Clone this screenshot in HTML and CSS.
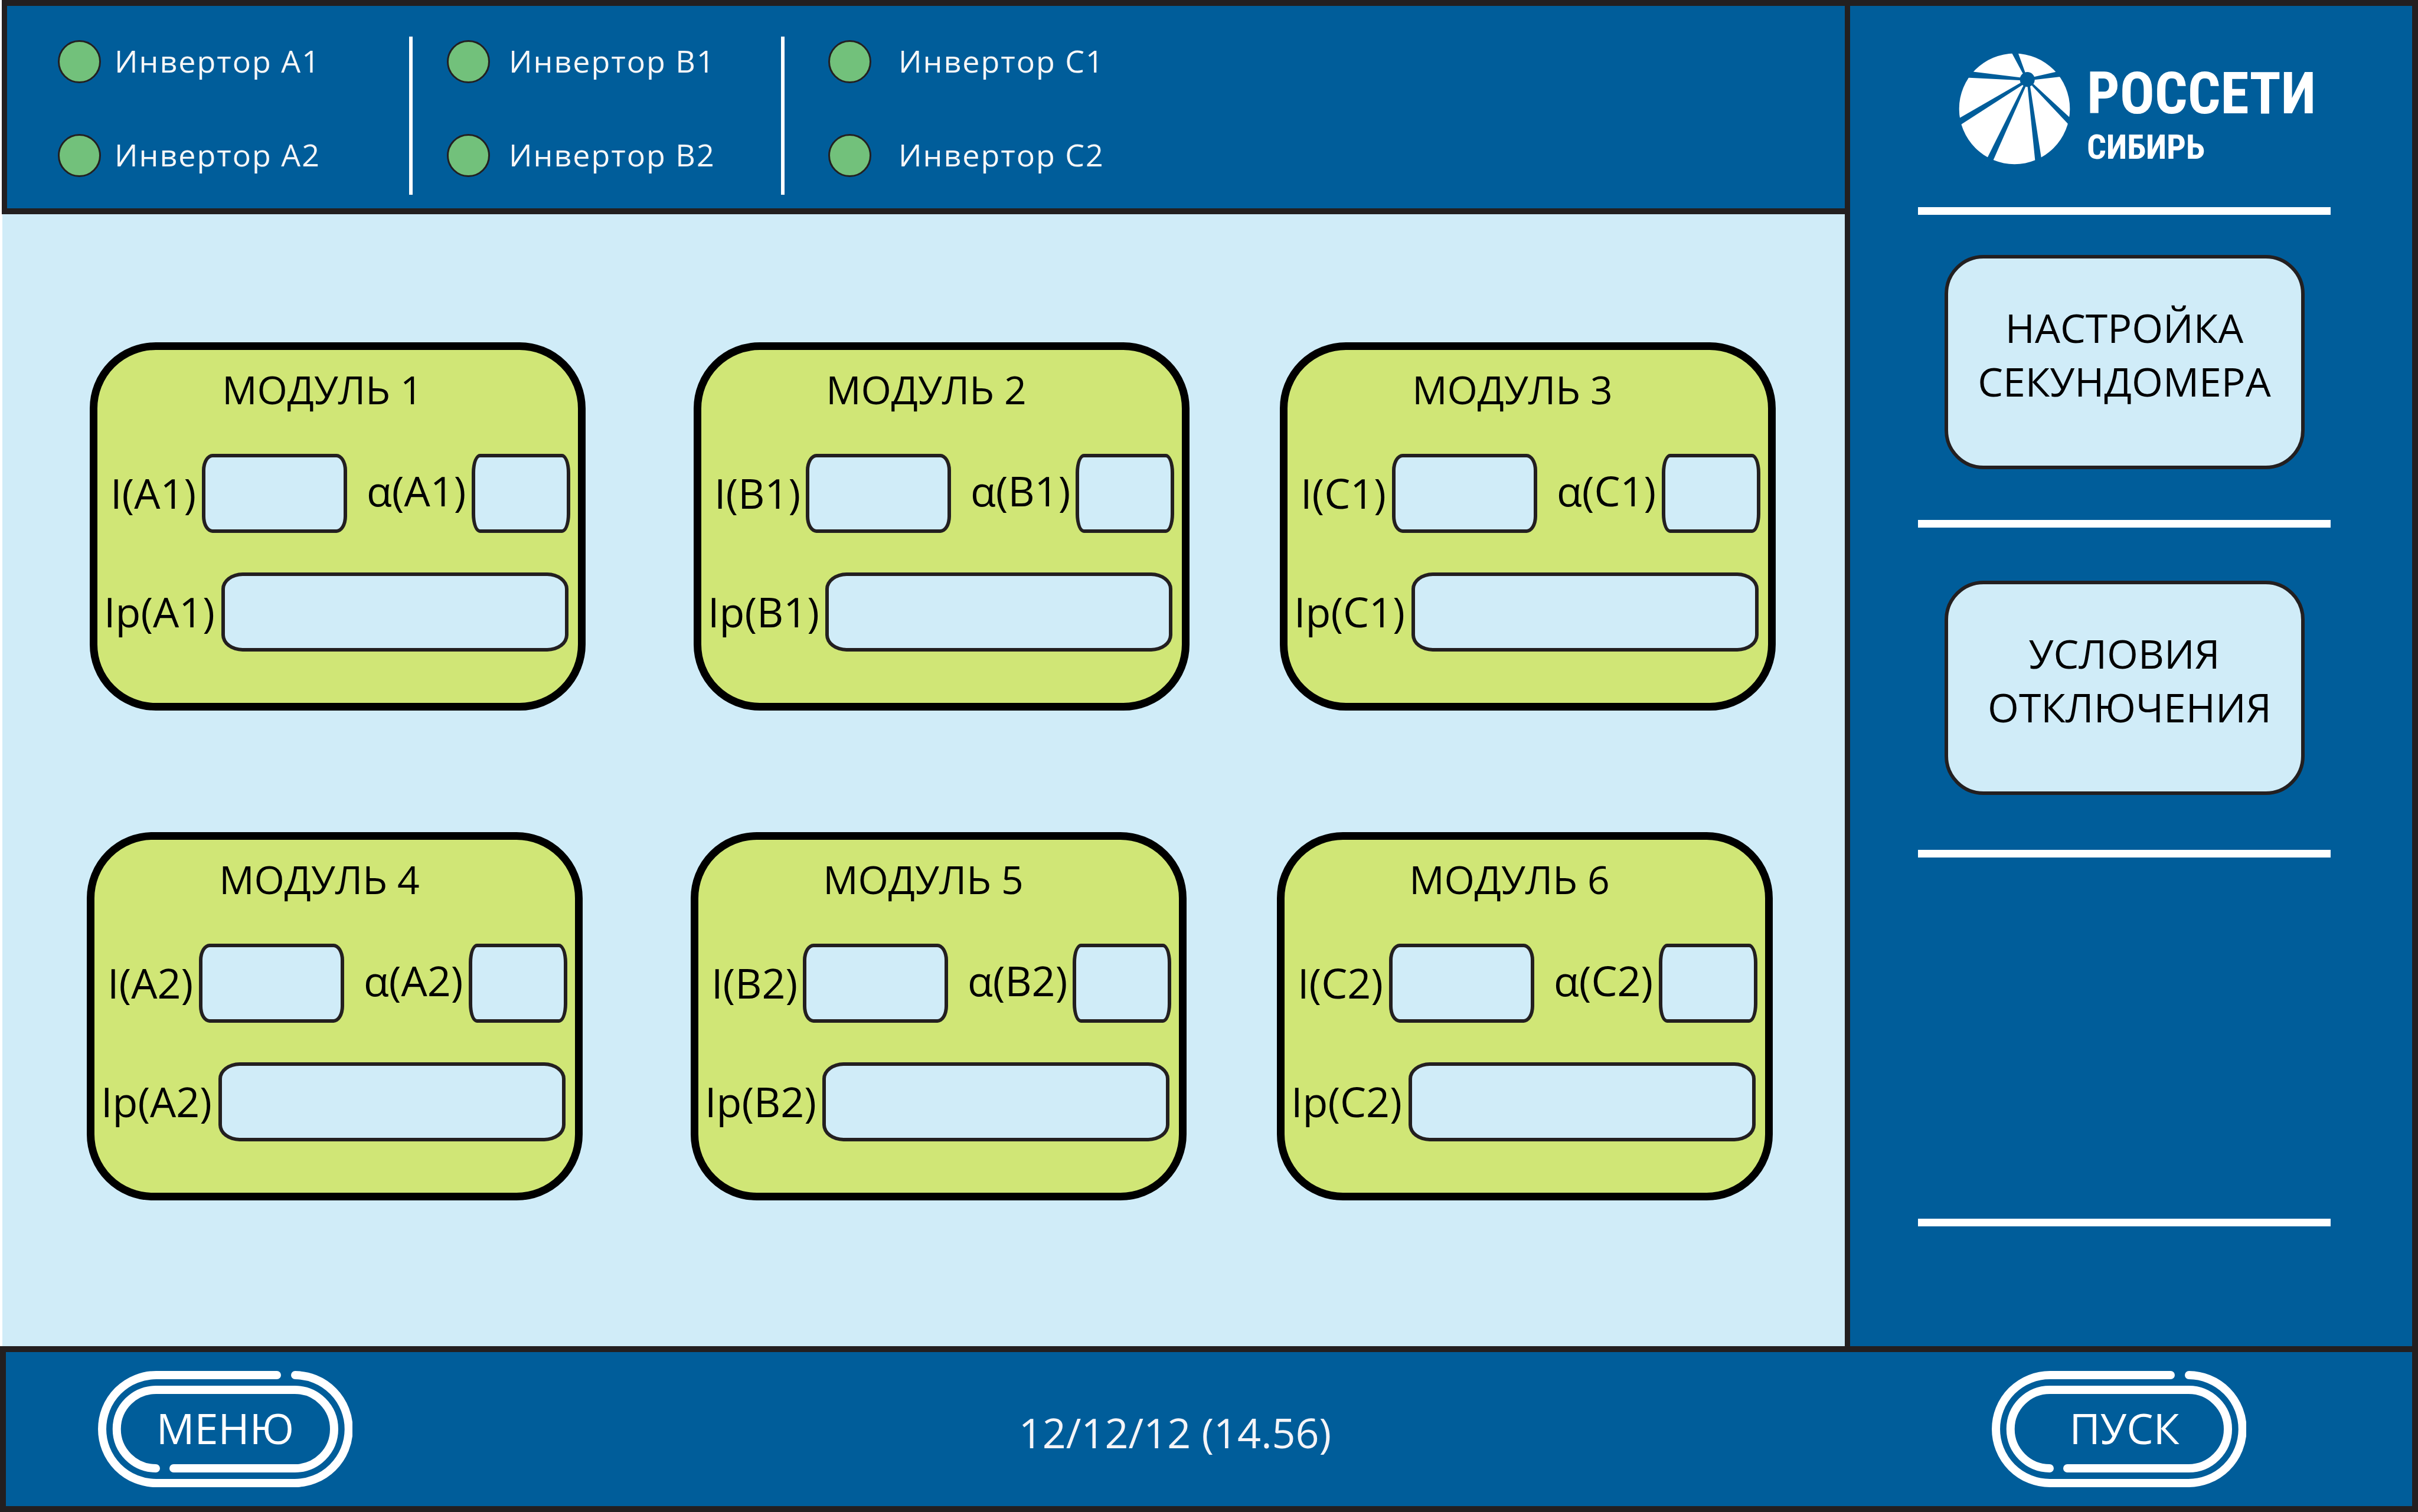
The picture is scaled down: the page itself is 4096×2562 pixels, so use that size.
FILE: index.html
```html
<!DOCTYPE html>
<html lang="ru">
<head>
<meta charset="utf-8">
<title>Россети Сибирь — панель модулей</title>
<link rel="stylesheet" href="styles.css">
</head>
<body>
<div class="panel">
  <header class="status">
    <ul class="status-group">
      <li class="inverter"><span class="lamp"></span><span class="inverter-name">Инвертор A1</span></li>
      <li class="inverter"><span class="lamp"></span><span class="inverter-name">Инвертор A2</span></li>
    </ul>
    <ul class="status-group status-group-b">
      <li class="inverter"><span class="lamp"></span><span class="inverter-name">Инвертор B1</span></li>
      <li class="inverter"><span class="lamp"></span><span class="inverter-name">Инвертор B2</span></li>
    </ul>
    <ul class="status-group status-group-c">
      <li class="inverter"><span class="lamp"></span><span class="inverter-name">Инвертор C1</span></li>
      <li class="inverter"><span class="lamp"></span><span class="inverter-name">Инвертор C2</span></li>
    </ul>
  </header>

  <aside class="sidebar">
    <div class="logo">
      <svg class="logo-mark" viewBox="42 28 189 189" aria-hidden="true">
        <circle class="logo-globe" cx="136.5" cy="122.4" r="93.8"/>
        <g class="logo-cut">
          <path d="M131 26H142L154.3 60 158 72 149.9 61.2Z"/>
          <path d="M50 57.4 145.9 69.2 158 72 145 74 50 69.3Z"/>
          <path d="M35.5 142.4 146.4 78.6 158 72 149.9 81.9 38.6 153.7Z"/>
          <path d="M85 216.4 149.9 86.3 158 72 154.7 86.3 95.3 221.3Z"/>
          <path d="M172.6 221.8 158.7 85.5 158 72 163 84.2 183.4 215.6Z"/>
          <path d="M237.9 144.4 169.6 81.2 158 72 167.5 84.7 233.5 154.7Z"/>
          <path d="M216.6 57.4 170.5 68.1 158 72 171.8 73 223 67Z"/>
          <circle cx="158.2" cy="72.7" r="12.6"/>
        </g>
      </svg>
      <div class="logo-text">
        <span class="logo-name">РОССЕТИ</span>
        <span class="logo-region">СИБИРЬ</span>
      </div>
    </div>
    <hr class="rule rule-logo">
    <button class="side-button" type="button">НАСТРОЙКА<br>СЕКУНДОМЕРА</button>
    <hr class="rule rule-timer">
    <button class="side-button" type="button">УСЛОВИЯ<br>&nbsp;ОТКЛЮЧЕНИЯ</button>
    <hr class="rule rule-trip">
    <hr class="rule rule-last">
  </aside>

  <main class="modules">
    <div class="module-row">
      <section class="module">
        <h2 class="module-title">МОДУЛЬ 1</h2>
        <div class="fields">
          <label class="name-i" for="i-a1">I(A1)</label><input class="box box-i" id="i-a1" type="text">
          <label class="name-alpha" for="al-a1">α(A1)</label><input class="box box-alpha" id="al-a1" type="text">
        </div>
        <div class="fields fields-wide">
          <label class="name-ip" for="ip-a1">Ip(A1)</label><input class="box box-ip" id="ip-a1" type="text">
        </div>
      </section>
      <section class="module">
        <h2 class="module-title">МОДУЛЬ 2</h2>
        <div class="fields">
          <label class="name-i" for="i-b1">I(B1)</label><input class="box box-i" id="i-b1" type="text">
          <label class="name-alpha" for="al-b1">α(B1)</label><input class="box box-alpha" id="al-b1" type="text">
        </div>
        <div class="fields fields-wide">
          <label class="name-ip" for="ip-b1">Ip(B1)</label><input class="box box-ip" id="ip-b1" type="text">
        </div>
      </section>
      <section class="module">
        <h2 class="module-title">МОДУЛЬ 3</h2>
        <div class="fields">
          <label class="name-i" for="i-c1">I(C1)</label><input class="box box-i" id="i-c1" type="text">
          <label class="name-alpha" for="al-c1">α(C1)</label><input class="box box-alpha" id="al-c1" type="text">
        </div>
        <div class="fields fields-wide">
          <label class="name-ip" for="ip-c1">Ip(C1)</label><input class="box box-ip" id="ip-c1" type="text">
        </div>
      </section>
    </div>
    <div class="module-row module-row-second">
      <section class="module">
        <h2 class="module-title">МОДУЛЬ 4</h2>
        <div class="fields">
          <label class="name-i" for="i-a2">I(A2)</label><input class="box box-i" id="i-a2" type="text">
          <label class="name-alpha" for="al-a2">α(A2)</label><input class="box box-alpha" id="al-a2" type="text">
        </div>
        <div class="fields fields-wide">
          <label class="name-ip" for="ip-a2">Ip(A2)</label><input class="box box-ip" id="ip-a2" type="text">
        </div>
      </section>
      <section class="module">
        <h2 class="module-title">МОДУЛЬ 5</h2>
        <div class="fields">
          <label class="name-i" for="i-b2">I(B2)</label><input class="box box-i" id="i-b2" type="text">
          <label class="name-alpha" for="al-b2">α(B2)</label><input class="box box-alpha" id="al-b2" type="text">
        </div>
        <div class="fields fields-wide">
          <label class="name-ip" for="ip-b2">Ip(B2)</label><input class="box box-ip" id="ip-b2" type="text">
        </div>
      </section>
      <section class="module">
        <h2 class="module-title">МОДУЛЬ 6</h2>
        <div class="fields">
          <label class="name-i" for="i-c2">I(C2)</label><input class="box box-i" id="i-c2" type="text">
          <label class="name-alpha" for="al-c2">α(C2)</label><input class="box box-alpha" id="al-c2" type="text">
        </div>
        <div class="fields fields-wide">
          <label class="name-ip" for="ip-c2">Ip(C2)</label><input class="box box-ip" id="ip-c2" type="text">
        </div>
      </section>
    </div>
  </main>

  <footer class="bottom">
    <button class="pill" type="button">
      <svg class="pill-frame" viewBox="0 0 431 197" aria-hidden="true">
        <path d="M303 7H98.5A91.5 91.5 0 0 0 98.5 190H332.5A91.5 91.5 0 0 0 334 7"/>
        <path d="M128 165H333.5A66.5 66.5 0 0 0 333.5 32H98.5A66.5 66.5 0 0 0 98 165"/>
      </svg>
      <span class="pill-text">МЕНЮ</span>
    </button>
    <time class="clock">12/12/12 (14.56)</time>
    <button class="pill" type="button">
      <svg class="pill-frame" viewBox="0 0 431 197" aria-hidden="true">
        <path d="M303 7H98.5A91.5 91.5 0 0 0 98.5 190H332.5A91.5 91.5 0 0 0 334 7"/>
        <path d="M128 165H333.5A66.5 66.5 0 0 0 333.5 32H98.5A66.5 66.5 0 0 0 98 165"/>
      </svg>
      <span class="pill-text pill-text-start">ПУСК</span>
    </button>
  </footer>
</div>
</body>
</html>
```
FILE: styles.css
```css
:root {
  --blue: #005d9a;
  --sky: #d0ecf8;
  --lime: #d0e676;
  --lamp: #72c17b;
  --ink: #231f20;
  --white: #ffffff;
}

* {
  box-sizing: border-box;
}

body {
  margin: 0;
  background: var(--white);
  color: #000000;
  font-family: "Open Sans", "Noto Sans", sans-serif;
  font-size: 70px;
  line-height: 92px;
}

button {
  margin: 0;
  font: inherit;
  color: inherit;
  cursor: pointer;
}

.panel {
  display: grid;
  grid-template-columns: minmax(0, 1fr) 971px;
  grid-template-rows: auto 1fr auto;
  min-height: 100vh;
}

/* Inverter status bar */

.status {
  display: flex;
  margin-left: 3px;
  padding: 52px 0 23px 86px;
  background: var(--blue);
  border: solid var(--ink);
  border-width: 10px 0 10px 9px;
  color: #f7f7f8;
  font-size: 52px;
  letter-spacing: 2px;
}

.status-group {
  display: flex;
  flex-direction: column;
  gap: 86px;
  width: 595px;
  height: 268px;
  margin: 0;
  padding: 6px 0 0;
  list-style: none;
}

.status-group-b {
  width: 630px;
  padding-left: 58px;
  border-left: 6px solid var(--white);
}

.status-group-c {
  padding-left: 74px;
  border-left: 6px solid var(--white);
}

.inverter {
  display: flex;
  align-items: center;
  gap: 23px;
  height: 73px;
}

.status-group-b .inverter {
  gap: 32px;
}

.status-group-c .inverter {
  gap: 46px;
}

.lamp {
  width: 73px;
  height: 73px;
  background: var(--lamp);
  border: 3px solid var(--ink);
  border-radius: 50%;
}

.inverter-name {
  padding-bottom: 4px;
  white-space: nowrap;
}

/* Sidebar */

.sidebar {
  grid-column: 2;
  grid-row: 1 / 3;
  display: flex;
  flex-direction: column;
  align-items: center;
  padding: 80px 23px 0 0;
  background: var(--blue);
  border: solid var(--ink);
  border-width: 10px 10px 0 9px;
}

.logo {
  display: flex;
  gap: 28px;
  width: 699px;
  height: 188px;
  padding-left: 69px;
  color: var(--white);
}

.logo-mark {
  flex: none;
  width: 189px;
  height: 189px;
}

.logo-globe {
  fill: var(--white);
}

.logo-cut {
  fill: var(--blue);
}

.logo-text {
  display: flex;
  flex-direction: column;
  padding-top: 19px;
  font-family: "Roboto Condensed", "Liberation Sans Narrow", "Roboto", sans-serif;
  font-weight: 700;
}

.logo-name {
  font-size: 98px;
  line-height: 100px;
}

.logo-region {
  font-size: 58px;
  line-height: 80px;
}

.rule {
  width: 699px;
  height: 13px;
  margin: 0;
  background: var(--white);
  border: 0;
}

.rule-logo {
  margin: 73px 0 68px;
}

.rule-timer {
  margin: 86px 0 90px;
}

.rule-trip {
  margin: 93px 0 612px;
}

.side-button {
  display: flex;
  justify-content: center;
  width: 610px;
  height: 363px;
  padding: 71px 0 0;
  background: var(--sky);
  border: 6px solid var(--ink);
  border-radius: 66px;
  font-size: 68px;
  line-height: 91px;
  text-align: center;
}

/* Modules */

.modules {
  display: flex;
  flex-direction: column;
  gap: 206px;
  margin-left: 4px;
  padding: 217px 0 0;
  background: var(--sky);
}

.module-row {
  display: grid;
  grid-template-columns: 1023fr 993fr 840fr;
  padding: 0 117px 0 148px;
}

.module-row-second {
  padding: 0 122px 0 143px;
}

.module {
  width: 840px;
  height: 624px;
  padding-top: 20px;
  background: var(--lime);
  border: 13px solid #000000;
  border-radius: 112px;
}

.module-title {
  margin: 0;
  padding-right: 52px;
  font-size: 66px;
  font-weight: 400;
  line-height: 92px;
  text-align: center;
}

.fields {
  display: flex;
  align-items: center;
  margin-top: 64px;
  padding: 0 13px 0 22px;
}

.fields-wide {
  margin-top: 67px;
  padding: 0 16px 0 11px;
}

.name-i,
.name-ip {
  flex: 0 0 155px;
  padding-bottom: 2px;
}

.name-alpha {
  flex: 0 0 178px;
  margin-left: 33px;
  padding-bottom: 10px;
}

.name-ip {
  flex-basis: 199px;
}

.box {
  min-width: 0;
  height: 134px;
  padding: 0 16px;
  background: var(--sky);
  border: 6px solid var(--ink);
  font: inherit;
}

.box-i {
  flex: 0 0 246px;
  border-radius: 18px / 28px;
}

.box-alpha {
  flex: 1;
  border-radius: 14px / 32px;
}

.box-ip {
  flex: 1;
  border-radius: 36px / 28px;
}

/* Bottom bar */

.bottom {
  grid-column: 1 / 3;
  display: flex;
  align-items: center;
  justify-content: space-between;
  padding: 32px 281px 32px 156px;
  background: var(--blue);
  border: 10px solid var(--ink);
  color: var(--white);
}

.pill {
  display: grid;
  width: 431px;
  height: 197px;
  padding: 0;
  background: none;
  border: 0;
  color: var(--white);
  font-size: 72px;
}

.pill-frame {
  grid-area: 1 / 1;
  width: 431px;
  height: 197px;
  fill: none;
  stroke: var(--white);
  stroke-width: 14px;
  stroke-linecap: round;
}

.pill-text {
  grid-area: 1 / 1;
  place-self: center;
  padding-bottom: 6px;
}

.pill-text-start {
  padding-left: 18px;
}

.clock {
  padding: 11px 0 0 10px;
  color: #f4f4f7;
}
```
